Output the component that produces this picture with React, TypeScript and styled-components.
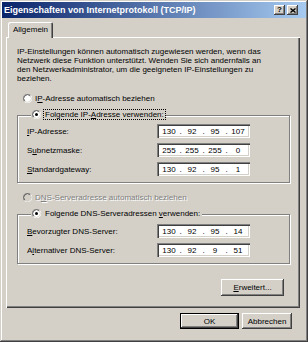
import * as React from 'react';
import styled, { createGlobalStyle } from 'styled-components';

const GlobalStyle = createGlobalStyle`
  html, body {
    margin: 0;
    padding: 0;
    background: #d4d0c8;
  }

  body {
    font-family: 'Liberation Sans', Arial, sans-serif;
    font-size: 8px;
    color: #000;
  }
`;

const raised = `
  box-shadow: inset -1px -1px #404040, inset 1px 1px #fff,
    inset -2px -2px #808080, inset 2px 2px #d4d0c8;
`;

const Window = styled.div`
  box-sizing: border-box;
  width: 308px;
  height: 342px;
  padding: 2px;
  display: flex;
  flex-direction: column;
  background: #d4d0c8;
  box-shadow: inset -1px -1px #404040, inset 1px 1px #d4d0c8,
    inset -2px -2px #808080, inset 2px 2px #fff;
`;

const TitleBar = styled.div`
  height: 16px;
  display: flex;
  align-items: center;
  padding: 0 8px 0 2px;
  background: linear-gradient(to right, #0a246a, #a6caf0);
  color: #fff;
  font-size: 9px;
  font-weight: bold;
`;

const Caption = styled.span`
  flex: 1;
  white-space: nowrap;
`;

const CaptionButton = styled.div<{ $gap?: number }>`
  width: 11px;
  height: 10px;
  margin-left: ${p => p.$gap ?? 0}px;
  display: flex;
  align-items: center;
  justify-content: center;
  background: #d4d0c8;
  color: #000;
  font-size: 8px;
  font-weight: bold;
  line-height: 1;
  ${raised}
`;

const Body = styled.div`
  display: flex;
  flex-direction: column;
  padding: 4px 4px 0 4px;
`;

const TabStrip = styled.div`
  display: flex;
  padding-left: 2px;
  margin-bottom: -1px;
  position: relative;
  z-index: 1;
`;

const Tab = styled.div`
  width: 45px;
  height: 16px;
  box-sizing: border-box;
  padding-top: 3px;
  text-align: center;
  background: #d4d0c8;
  border-radius: 2px 2px 0 0;
  box-shadow: inset 1px 1px #fff, inset -1px 0 #404040, inset -2px 0 #808080;
`;

const Panel = styled.div`
  box-sizing: border-box;
  width: 294px;
  height: 271px;
  padding: 10px 10px 0 11px;
  display: flex;
  flex-direction: column;
  box-shadow: inset 1px 1px #fff, inset -1px -1px #404040,
    inset -2px -2px #808080;
`;

const Intro = styled.p`
  margin: 0;
  line-height: 9px;
  white-space: nowrap;
`;

const RadioRow = styled.label<{ $top: number; $disabled?: boolean }>`
  height: 11px;
  margin-top: ${p => p.$top}px;
  padding-left: 6px;
  display: flex;
  align-items: center;
  gap: 3px;
  white-space: nowrap;
  color: ${p => (p.$disabled ? '#808080' : '#000')};
  text-shadow: ${p => (p.$disabled ? '1px 1px #fff' : 'none')};
`;

const LegendRow = styled.label<{ $focus?: boolean }>`
  display: flex;
  align-items: center;
  gap: 3px;
  white-space: nowrap;

  & > span {
    padding: 0 1px;
    outline: ${p => (p.$focus ? '1px dotted #000' : 'none')};
  }
`;

const Group = styled.fieldset<{ $top: number; $pt: number }>`
  margin: ${p => p.$top}px 0 0;
  padding: ${p => p.$pt}px 0 6px 9px;
  min-width: 0;
  border: 1px solid #808080;
  box-shadow: inset 1px 1px #fff, 1px 1px #fff;
`;

const GroupLegend = styled.legend`
  margin-left: 4px;
  padding: 0 1px;
  height: 11px;
  background: #d4d0c8;
`;

const FieldGrid = styled.div`
  display: grid;
  grid-template-columns: 130px 93px;
  row-gap: 5px;
  align-items: center;
`;

const FieldLabel = styled.span`
  white-space: nowrap;
`;

const IpBox = styled.div`
  box-sizing: border-box;
  width: 93px;
  height: 14px;
  padding: 0 3px;
  display: flex;
  align-items: center;
  background: #fff;
  box-shadow: inset 1px 1px #808080, inset 2px 2px #404040,
    inset -1px -1px #fff, inset -2px -2px #d4d0c8;
`;

const Octet = styled.span`
  width: 18px;
  text-align: center;
`;

const Dot = styled.span`
  width: 5px;
  text-align: center;
`;

const Button = styled.div<{ $width: number; $default?: boolean }>`
  box-sizing: border-box;
  width: ${p => p.$width}px;
  height: 16px;
  display: flex;
  align-items: center;
  justify-content: center;
  background: #d4d0c8;
  ${p =>
    p.$default
      ? `box-shadow: inset 0 0 0 1px #000, inset -2px -2px #404040,
          inset 2px 2px #fff, inset -3px -3px #808080;`
      : raised}
`;

const AdvancedButton = styled(Button)`
  align-self: flex-end;
  height: 17px;
  margin: 15px 6px 0 0;
`;

const ButtonRow = styled.div`
  display: flex;
  justify-content: flex-end;
  gap: 3px;
  margin-top: 5px;
  padding-right: 14px;
`;

function Radio({ checked, disabled }: { checked?: boolean; disabled?: boolean }) {
  return (
    <svg width="9" height="9" viewBox="0 0 12 12" aria-hidden="true">
      <circle cx="6" cy="6" r="5.5" fill={disabled ? '#d4d0c8' : '#fff'} />
      <path d="M10.2 1.8 A5.5 5.5 0 0 0 1.8 10.2" fill="none" stroke="#808080" strokeWidth="1" />
      <path d="M1.8 10.2 A5.5 5.5 0 0 0 10.2 1.8" fill="none" stroke="#fff" strokeWidth="1" />
      <path d="M9.5 2.5 A4.5 4.5 0 0 0 2.5 9.5" fill="none" stroke="#404040" strokeWidth="1" />
      <path d="M2.5 9.5 A4.5 4.5 0 0 0 9.5 2.5" fill="none" stroke="#d4d0c8" strokeWidth="1" />
      {checked && <circle cx="6" cy="6" r="2" fill="#000" />}
    </svg>
  );
}

function IpField({ value }: { value: string }) {
  const parts = value.split('.');
  return (
    <IpBox>
      {parts.map((part, i) => (
        <React.Fragment key={i}>
          {i > 0 && <Dot>.</Dot>}
          <Octet>{part}</Octet>
        </React.Fragment>
      ))}
    </IpBox>
  );
}

export default function App() {
  return (
    <>
      <GlobalStyle />
      <Window>
        <TitleBar>
          <Caption>Eigenschaften von Internetprotokoll (TCP/IP)</Caption>
          <CaptionButton>?</CaptionButton>
          <CaptionButton $gap={2}>
            <svg width="6" height="5" viewBox="0 0 6 5" aria-hidden="true">
              <path d="M0.5 0.5 L5.5 4.5 M5.5 0.5 L0.5 4.5" stroke="#000" strokeWidth="1.4" />
            </svg>
          </CaptionButton>
        </TitleBar>

        <Body>
          <TabStrip>
            <Tab>Allgemein</Tab>
          </TabStrip>
          <Panel>
            <Intro>
              IP-Einstellungen können automatisch zugewiesen werden, wenn das
              <br />
              Netzwerk diese Funktion unterstützt. Wenden Sie sich andernfalls an
              <br />
              den Netzwerkadministrator, um die geeigneten IP-Einstellungen zu
              <br />
              beziehen.
            </Intro>

            <RadioRow $top={10}>
              <Radio />
              <span>
                I<u>P</u>-Adresse automatisch beziehen
              </span>
            </RadioRow>

            <Group $top={6} $pt={3}>
              <GroupLegend>
                <LegendRow $focus>
                  <Radio checked />
                  <span>
                    Folgende IP-<u>A</u>dresse verwenden:
                  </span>
                </LegendRow>
              </GroupLegend>
              <FieldGrid>
                <FieldLabel>
                  <u>I</u>P-Adresse:
                </FieldLabel>
                <IpField value="130.92.95.107" />
                <FieldLabel>
                  S<u>u</u>bnetzmaske:
                </FieldLabel>
                <IpField value="255.255.255.0" />
                <FieldLabel>
                  <u>S</u>tandardgateway:
                </FieldLabel>
                <IpField value="130.92.95.1" />
              </FieldGrid>
            </Group>

            <RadioRow $top={9} $disabled>
              <Radio disabled />
              <span>
                D<u>N</u>S-Serveradresse automatisch beziehen
              </span>
            </RadioRow>

            <Group $top={6} $pt={4}>
              <GroupLegend>
                <LegendRow>
                  <Radio checked />
                  <span>
                    Folgende DNS-Serveradressen <u>v</u>erwenden:
                  </span>
                </LegendRow>
              </GroupLegend>
              <FieldGrid>
                <FieldLabel>
                  <u>B</u>evorzugter DNS-Server:
                </FieldLabel>
                <IpField value="130.92.95.14" />
                <FieldLabel>
                  A<u>l</u>ternativer DNS-Server:
                </FieldLabel>
                <IpField value="130.92.9.51" />
              </FieldGrid>
            </Group>

            <AdvancedButton $width={63}>
              <span>
                <u>E</u>rweitert...
              </span>
            </AdvancedButton>
          </Panel>
        </Body>

        <ButtonRow>
          <Button $width={59} $default>
            OK
          </Button>
          <Button $width={50}>Abbrechen</Button>
        </ButtonRow>
      </Window>
    </>
  );
}
